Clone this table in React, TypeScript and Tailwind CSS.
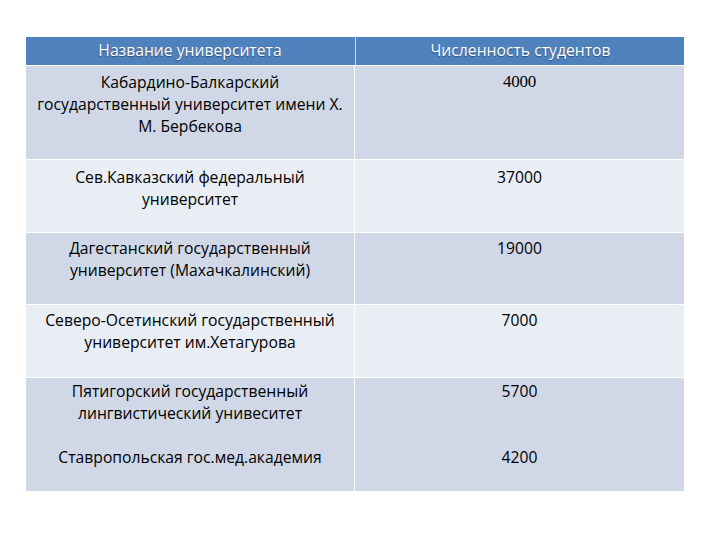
const rows = [
  {
    name: ['Кабардино-Балкарский', 'государственный университет имени Х.', 'М. Бербекова'],
    count: ['4000'],
    h: 'h-[93px]',
    bg: 'bg-[#d0d8e8]',
    pt: 'pt-[5px]',
    serif: true,
  },
  {
    name: ['Сев.Кавказский федеральный', 'университет'],
    count: ['37000'],
    h: 'h-[72px]',
    bg: 'bg-[#e9edf4]',
    pt: 'pt-[6px]',
  },
  {
    name: ['Дагестанский государственный', 'университет (Махачкалинский)'],
    count: ['19000'],
    h: 'h-[71px]',
    bg: 'bg-[#d0d8e8]',
    pt: 'pt-[4px]',
  },
  {
    name: ['Северо-Осетинский государственный', 'университет им.Хетагурова'],
    count: ['7000'],
    h: 'h-[72px]',
    bg: 'bg-[#e9edf4]',
    pt: 'pt-[4px]',
  },
  {
    name: ['Пятигорский государственный', 'лингвистический унивеситет', '\u00a0', 'Ставропольская гос.мед.академия'],
    count: ['5700', '\u00a0', '\u00a0', '4200'],
    h: 'h-[113px]',
    bg: 'bg-[#d0d8e8]',
    pt: 'pt-[2px]',
  },
];

export default function App() {
  return (
    <div className="w-[720px] h-[540px] bg-white pt-[37px] pl-[26px]" style={{ fontFamily: '"Open Sans", sans-serif' }}>
      <div className="w-[658px] flex flex-col gap-[1px]">
        {/* шапка */}
        <div className="flex gap-[1px] h-[28px] bg-[#4f81bd] text-white text-[15.7px]">
          <div className="w-[328px] flex items-center justify-center [text-shadow:0_1px_1px_rgba(0,0,0,0.4)]">
            Название университета
          </div>
          <div className="w-[1px] bg-white/70" />
          <div className="flex-1 flex items-center justify-center [text-shadow:0_1px_1px_rgba(0,0,0,0.4)]">
            Численность студентов
          </div>
        </div>

        {rows.map((r, i) => (
          <div key={i} className={`flex gap-[1px] ${r.h}`}>
            <div className={`w-[328px] ${r.bg} ${r.pt} text-center text-[15.7px] leading-[22px] text-black`}>
              {r.name.map((l, j) => (
                <div key={j}>{l}</div>
              ))}
            </div>
            <div
              className={`flex-1 ${r.bg} ${r.pt} text-center text-[15.7px] leading-[22px] text-black`}
              style={r.serif ? { fontFamily: '"Liberation Serif", serif', fontSize: '17px', letterSpacing: '-0.3px' } : undefined}
            >
              {r.count.map((l, j) => (
                <div key={j}>{l}</div>
              ))}
            </div>
          </div>
        ))}
      </div>
    </div>
  );
}
